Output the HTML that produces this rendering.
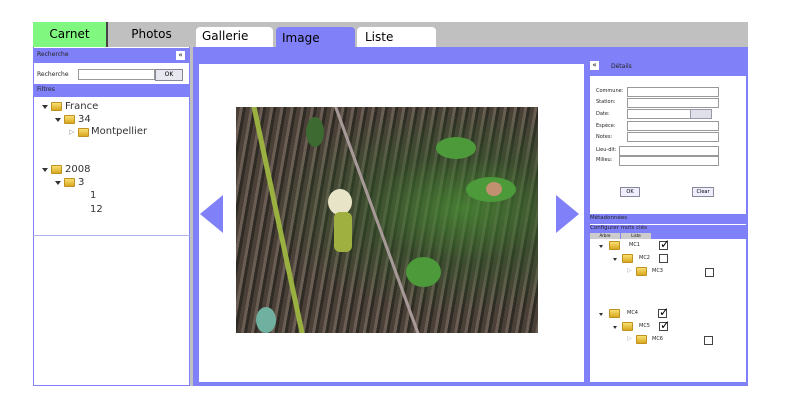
<!DOCTYPE html><html><head><style>
body{margin:0;width:800px;height:416px;background:#fff;position:relative;font-family:"DejaVu Sans","Liberation Sans",sans-serif;overflow:hidden}
div{position:absolute;box-sizing:border-box}
.p{background:#8080f8}
.s{font-size:6px;color:#222}
.f{width:11px;height:9px;background:linear-gradient(#f8e070,#d8a820);border-radius:1px;border:1px solid #c09020}
.t{font-size:10px;color:#333}
.tri{width:0;height:0;border-left:3px solid transparent;border-right:3px solid transparent;border-top:4px solid #333}
.in{background:#fff;border:1px solid #999;height:10px}
.cb{width:9px;height:9px;border:1px solid #444;background:#fff}
.ck{font-size:12px;line-height:9px;color:#000}
.lf{border-radius:50%;background:#4c9a3a}
</style></head><body>
<div style="left:33px;top:22px;width:715px;height:25px;background:#c0c0c0"></div>
<div style="left:33px;top:22px;width:75px;height:25px;background:#80f880;font-size:12px;text-align:center;line-height:24px;border-right:2px solid #444">Carnet</div>
<div style="left:110px;top:22px;width:83px;height:25px;font-size:12px;text-align:center;line-height:24px">Photos</div>
<div style="left:196px;top:27px;width:77px;height:20px;background:#fff;border-radius:4px 4px 0 0;font-size:12px;padding:2px 6px">Gallerie</div>
<div class="p" style="left:276px;top:27px;width:79px;height:20px;border-radius:4px 4px 0 0;font-size:12px;padding:4px 6px">Image</div>
<div style="left:357px;top:27px;width:79px;height:20px;background:#fff;border-radius:4px 4px 0 0;font-size:12px;padding:3px 8px">Liste</div>
<div style="left:33px;top:47px;width:157px;height:339px;border:1px solid #8080f8;border-top:0;background:#fff"></div>
<div class="p s" style="left:33px;top:48px;width:157px;height:15px;padding:3px 4px;color:#222">Recherche</div>
<div style="left:176px;top:51px;width:9px;height:9px;background:#fff;font-size:7px;line-height:9px;text-align:center">«</div>
<div class="s" style="left:37px;top:71px">Recherche</div>
<div class="in" style="left:78px;top:69px;width:77px;height:11px"></div>
<div style="left:155px;top:69px;width:28px;height:12px;background:#e8e8f0;border:1px solid #889;font-size:6px;text-align:center;line-height:10px">OK</div>
<div class="p s" style="left:33px;top:84px;width:157px;height:13px;padding:2px 4px">Filtres</div>
<div class="tri" style="left:42px;top:105px"></div><div class="f" style="left:51px;top:102px"></div><div class="t" style="left:65px;top:101px">France</div>
<div class="tri" style="left:55px;top:118px"></div><div class="f" style="left:64px;top:115px"></div><div class="t" style="left:78px;top:114px">34</div>
<div style="left:69px;top:128px;font-size:7px;color:#999">▷</div><div class="f" style="left:78px;top:128px"></div><div class="t" style="left:91px;top:126px">Montpellier</div>
<div class="tri" style="left:42px;top:168px"></div><div class="f" style="left:51px;top:165px"></div><div class="t" style="left:65px;top:164px">2008</div>
<div class="tri" style="left:55px;top:181px"></div><div class="f" style="left:64px;top:178px"></div><div class="t" style="left:78px;top:177px">3</div>
<div class="t" style="left:90px;top:190px">1</div>
<div class="t" style="left:90px;top:204px">12</div>
<div style="left:33px;top:235px;width:157px;height:1px;background:#b0b0f0"></div>
<div style="left:190px;top:47px;width:3px;height:339px;background:#c0c0c0"></div>
<div class="p" style="left:193px;top:47px;width:395px;height:339px"></div>
<div style="left:199px;top:64px;width:385px;height:318px;background:#fff"></div>
<div style="left:236px;top:107px;width:302px;height:226px;overflow:hidden;background:repeating-linear-gradient(100deg,#4a4038 0 4px,#6a5e54 4px 7px,#2e2a24 7px 10px)">
<div style="left:0;top:0;width:302px;height:226px;background:radial-gradient(ellipse at 75% 45%,rgba(70,140,50,.8) 0%,rgba(50,90,40,.5) 30%,transparent 60%)"></div>
<div class="lf" style="left:200px;top:30px;width:40px;height:22px"></div>
<div class="lf" style="left:230px;top:70px;width:50px;height:25px"></div>
<div class="lf" style="left:170px;top:150px;width:35px;height:30px"></div>
<div class="lf" style="left:70px;top:10px;width:18px;height:30px;background:#3c6a30"></div>
<div style="left:40px;top:-10px;width:5px;height:250px;background:#9ab040;transform:rotate(-12deg)"></div>
<div style="left:140px;top:-10px;width:3px;height:250px;background:#a89a98;transform:rotate(-20deg)"></div>
<div style="left:92px;top:82px;width:24px;height:26px;border-radius:50%;background:#e8e4c8"></div>
<div style="left:98px;top:105px;width:18px;height:40px;border-radius:6px;background:#a0b040"></div>
<div style="left:250px;top:75px;width:16px;height:14px;border-radius:50%;background:#c09070"></div>
<div style="left:20px;top:200px;width:20px;height:26px;border-radius:50%;background:#70b0a0"></div>
</div>
<div style="left:200px;top:195px;width:0;height:0;border-top:19px solid transparent;border-bottom:19px solid transparent;border-right:23px solid #8080f8"></div>
<div style="left:556px;top:195px;width:0;height:0;border-top:19px solid transparent;border-bottom:19px solid transparent;border-left:23px solid #8080f8"></div>
<div class="p" style="left:588px;top:47px;width:160px;height:339px"></div>
<div style="left:590px;top:76px;width:156px;height:138px;background:#fff"></div>
<div style="left:590px;top:61px;width:9px;height:9px;background:#fff;font-size:7px;line-height:9px;text-align:center">«</div>
<div class="s" style="left:611px;top:63px">Détails</div>
<div class="s" style="left:596px;top:88px;font-size:5px">Commune:</div><div class="in" style="left:627px;top:87px;width:92px"></div>
<div class="s" style="left:596px;top:99px;font-size:5px">Station:</div><div class="in" style="left:627px;top:98px;width:92px"></div>
<div class="s" style="left:596px;top:111px;font-size:5px">Date:</div><div class="in" style="left:627px;top:109px;width:64px"></div><div style="left:690px;top:109px;width:22px;height:10px;background:#e0e0ea;border:1px solid #99a"></div>
<div class="s" style="left:596px;top:123px;font-size:5px">Espèce:</div><div class="in" style="left:627px;top:121px;width:92px"></div>
<div class="s" style="left:596px;top:134px;font-size:5px">Notes:</div><div class="in" style="left:627px;top:132px;width:92px"></div>
<div class="s" style="left:596px;top:147px;font-size:5px">Lieu-dit:</div><div class="in" style="left:619px;top:146px;width:100px"></div>
<div class="s" style="left:596px;top:157px;font-size:5px">Milieu:</div><div class="in" style="left:619px;top:156px;width:100px"></div>
<div style="left:620px;top:187px;width:20px;height:10px;background:#eef;border:1px solid #889;font-size:5px;text-align:center;line-height:8px">OK</div>
<div style="left:692px;top:187px;width:22px;height:10px;background:#eef;border:1px solid #889;font-size:5px;text-align:center;line-height:8px">Clear</div>
<div class="s" style="left:590px;top:215px;font-size:5.5px">Métadonnées</div>
<div style="left:590px;top:224px;width:156px;height:1px;background:#fff"></div>
<div class="s" style="left:590px;top:225px;font-size:5.5px">Configurer mots clés</div>
<div style="left:590px;top:233px;width:30px;height:6px;background:#ccc;font-size:4px;text-align:center">Arbre</div>
<div style="left:621px;top:233px;width:30px;height:6px;background:#ccc;font-size:4px;text-align:center">Liste</div>
<div style="left:590px;top:239px;width:156px;height:143px;background:#fff"></div>
<div class="tri" style="left:599px;top:245px;border-width:3px 2px 0"></div><div class="f" style="left:609px;top:241px"></div><div class="s" style="left:629px;top:242px;font-size:5px">MC1</div><div class="cb" style="left:659px;top:241px"></div><div class="ck" style="left:660px;top:240px">✓</div>
<div class="tri" style="left:613px;top:258px;border-width:3px 2px 0"></div><div class="f" style="left:622px;top:254px"></div><div class="s" style="left:639px;top:255px;font-size:5px">MC2</div><div class="cb" style="left:659px;top:254px"></div>
<div style="left:627px;top:267px;font-size:6px;color:#aaa">▷</div><div class="f" style="left:636px;top:267px"></div><div class="s" style="left:652px;top:268px;font-size:5px">MC3</div><div class="cb" style="left:705px;top:268px"></div>
<div class="tri" style="left:599px;top:313px;border-width:3px 2px 0"></div><div class="f" style="left:609px;top:309px"></div><div class="s" style="left:627px;top:310px;font-size:5px">MC4</div><div class="cb" style="left:658px;top:309px"></div><div class="ck" style="left:659px;top:308px">✓</div>
<div class="tri" style="left:613px;top:326px;border-width:3px 2px 0"></div><div class="f" style="left:622px;top:322px"></div><div class="s" style="left:639px;top:323px;font-size:5px">MC5</div><div class="cb" style="left:659px;top:322px"></div><div class="ck" style="left:660px;top:321px">✓</div>
<div style="left:627px;top:335px;font-size:6px;color:#aaa">▷</div><div class="f" style="left:636px;top:335px"></div><div class="s" style="left:652px;top:336px;font-size:5px">MC6</div><div class="cb" style="left:704px;top:336px"></div>
</body></html>
